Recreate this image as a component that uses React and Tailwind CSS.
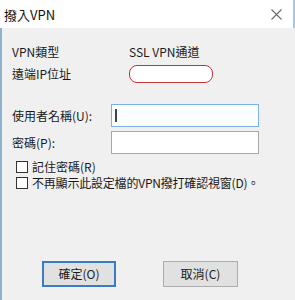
import React from "react";

export default function App() {
  const font = { fontFamily: '"Noto Sans CJK TC", "Noto Sans", sans-serif' };
  return (
    <div
      lang="zh-Hant-TW"
      className="w-[295px] h-[300px] bg-[#f0f0f0] flex flex-col text-[12px] text-[#1a1a1a] overflow-hidden"
      style={font}
    >
      {/* title bar */}
      <div className="h-[28px] bg-white flex items-center justify-between pl-[4px] pr-[11px] border-r-2 border-[#a9c6dc] shrink-0">
        <span className="text-[13px] leading-none text-[#111]">撥入VPN</span>
        <svg width="11" height="11" viewBox="0 0 11 11" className="mt-[1px]">
          <path d="M0.5 0.5 L10.5 10.5 M10.5 0.5 L0.5 10.5" stroke="#6b6b6b" strokeWidth="1.1" fill="none" />
        </svg>
      </div>

      {/* body */}
      <div className="flex-1 flex flex-col border-l-2 border-[#8db2cb] pl-[10px] pt-[16px]">
        <div className="h-[16px] flex items-center">
          <span className="w-[117px] leading-none">VPN類型</span>
          <span className="leading-none">SSL VPN通道</span>
        </div>
        <div className="mt-[5px] h-[18px] flex items-center">
          <span className="w-[117px] leading-none">遠端IP位址</span>
          <div className="w-[84px] h-[18px] rounded-[8px] border-[1.5px] border-[#c4343a] bg-white" />
        </div>

        <div className="mt-[21px] h-[23px] flex items-center">
          <span className="w-[99px] leading-none">使用者名稱(U):</span>
          <div className="w-[148px] h-[23px] border border-[#7fb2e4] bg-[#fbfeff] flex items-center pl-[3px]">
            <div className="w-[2px] h-[13px] bg-[#444]" />
          </div>
        </div>
        <div className="mt-[4px] h-[23px] flex items-center">
          <span className="w-[99px] leading-none">密碼(P):</span>
          <div className="w-[148px] h-[23px] border-[1.5px] border-[#a8a8a8] bg-white" />
        </div>

        <div className="mt-[7px] h-[12px] flex items-center pl-[4px] gap-[4px]">
          <div className="w-[12px] h-[12px] border border-[#333] bg-white" />
          <span className="leading-none">記住密碼(R)</span>
        </div>
        <div className="mt-[4px] h-[12px] flex items-center pl-[4px] gap-[4px]">
          <div className="w-[12px] h-[12px] border border-[#333] bg-white" />
          <span className="leading-none whitespace-nowrap tracking-[-0.2px]">不再顯示此設定檔的VPN撥打確認視窗(D)。</span>
        </div>

        <div className="mt-[72px] flex pl-[30px] gap-[47px]">
          <div className="w-[74px] h-[26px] border-2 border-[#3a7cc4] bg-[#e1e1e1] flex items-center justify-center">
            <span className="leading-none">確定(O)</span>
          </div>
          <div className="w-[75px] h-[26px] border border-[#adadad] bg-[#e1e1e1] flex items-center justify-center">
            <span className="leading-none">取消(C)</span>
          </div>
        </div>
      </div>
    </div>
  );
}
